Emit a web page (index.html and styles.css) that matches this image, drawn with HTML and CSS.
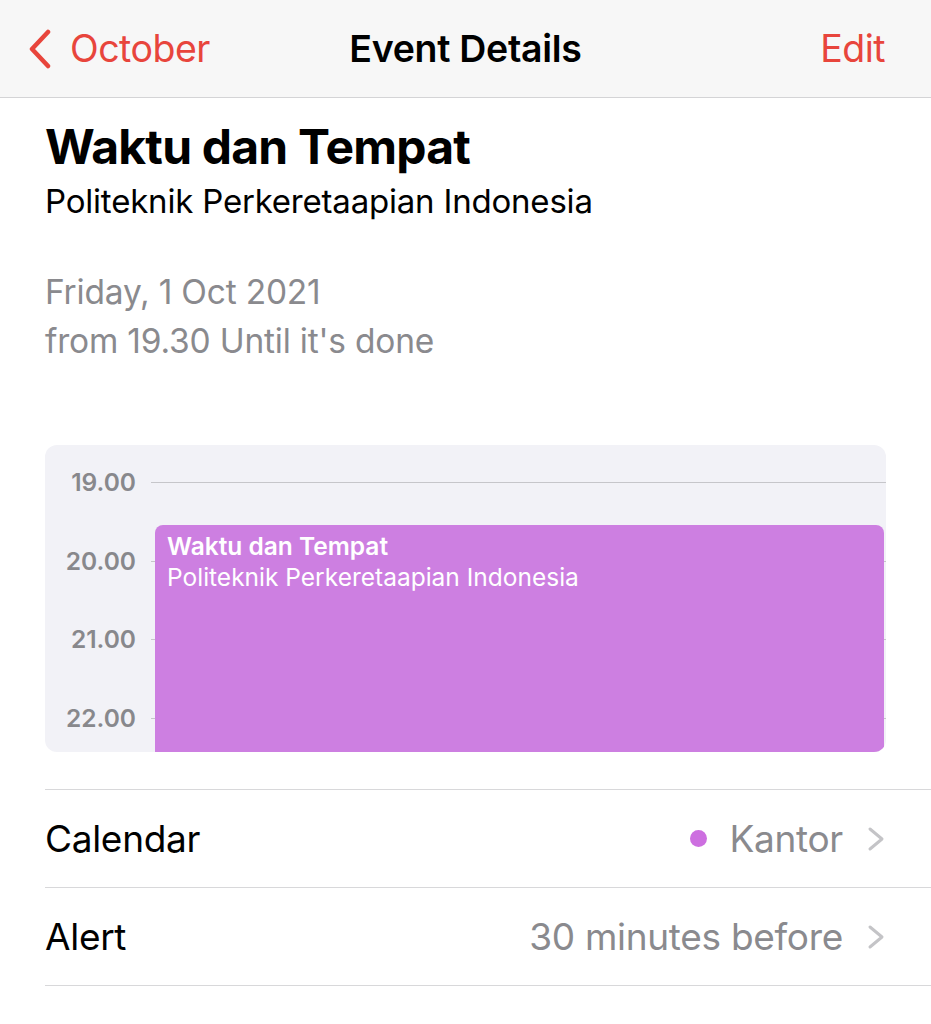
FILE: index.html
```html
<!DOCTYPE html>
<html>
<head>
<meta charset="utf-8">
<link rel="stylesheet" href="styles.css">
</head>
<body>
<header class="nav">
  <div class="nav-left">
    <svg class="back" width="24" height="40" viewBox="0 0 24 40"><path d="M20 3 L4 20 L20 37" fill="none" stroke="#e8453c" stroke-width="4.5" stroke-linecap="round" stroke-linejoin="round"/></svg>
    <span class="nav-link">October</span>
  </div>
  <div class="nav-title">Event Details</div>
  <div class="nav-right"><span class="nav-link">Edit</span></div>
</header>
<main class="content">
  <h1 class="title">Waktu dan Tempat</h1>
  <div class="location">Politeknik Perkeretaapian Indonesia</div>
  <div class="when">
    <div>Friday, 1 Oct 2021</div>
    <div>from 19.30 Until it's done</div>
  </div>
  <div class="day">
    <div class="hours">
      <div class="hour"><span class="hl">19.00</span><span class="hline"></span></div>
      <div class="hour"><span class="hl">20.00</span><span class="hline"></span></div>
      <div class="hour"><span class="hl">21.00</span><span class="hline"></span></div>
      <div class="hour"><span class="hl">22.00</span><span class="hline"></span></div>
    </div>
    <div class="event">
      <div class="ev-title">Waktu dan Tempat</div>
      <div class="ev-sub">Politeknik Perkeretaapian Indonesia</div>
    </div>
  </div>
  <div class="rows">
    <div class="row">
      <span class="row-label">Calendar</span>
      <span class="row-value"><span class="dot"></span>Kantor<svg class="chev" width="18" height="28" viewBox="0 0 18 28"><path d="M3 4 L15 14 L3 24" fill="none" stroke="#c4c4c7" stroke-width="3" stroke-linecap="round" stroke-linejoin="round"/></svg></span>
    </div>
    <div class="row">
      <span class="row-label">Alert</span>
      <span class="row-value">30 minutes before<svg class="chev" width="18" height="28" viewBox="0 0 18 28"><path d="M3 4 L15 14 L3 24" fill="none" stroke="#c4c4c7" stroke-width="3" stroke-linecap="round" stroke-linejoin="round"/></svg></span>
    </div>
  </div>
</main>
</body>
</html>
```
FILE: styles.css
```css
* { box-sizing: border-box; }
html, body { margin: 0; padding: 0; background: #ffffff; }
body {
  font-family: Inter, "Noto Sans", "Liberation Sans", sans-serif;
  color: #000;
  width: 931px;
  height: 1024px;
  overflow: hidden;
}
.nav {
  height: 98px;
  background: #f7f7f7;
  border-bottom: 1px solid #d4d4d6;
  display: grid;
  grid-template-columns: 1fr auto 1fr;
  align-items: center;
  padding: 0 28px 0 28px;
}
.nav-left { display: flex; align-items: center; gap: 18px; }
.back { display: block; }
.nav-link { color: #e8453c; font-size: 37.5px; letter-spacing: -0.5px; }
.nav-title { font-size: 37.5px; font-weight: 600; letter-spacing: -0.3px; }
.nav-right { justify-self: end; margin-right: 18px; }
.content { padding: 0 45px 0 45px; }
.title {
  margin: 21px 0 0 0;
  font-size: 48px;
  font-weight: 700;
  letter-spacing: -0.8px;
  line-height: 56px;
}
.location { font-size: 33px; line-height: 42px; margin-top: 5px; letter-spacing: -0.2px; }
.when {
  margin-top: 46px;
  color: #8a8a8e;
  font-size: 33.5px;
  line-height: 49px;
  letter-spacing: -0.2px;
}
.day {
  margin-top: 79px;
  height: 307px;
  background: #f2f2f7;
  border-radius: 12px;
  position: relative;
  overflow: hidden;
}
.hours { padding-top: 22px; }
.hour { height: 78.7px; display: flex; align-items: flex-start; }
.hl {
  width: 91px;
  text-align: right;
  font-size: 24.5px;
  font-weight: 600;
  color: #88888c;
  line-height: 30px;
}
.hline { flex: 1; margin-left: 15px; margin-top: 15px; height: 1px; background: #c6c6ca; }
.event {
  position: absolute;
  left: 110px;
  right: 2px;
  top: 80px;
  bottom: 0;
  background: #cd7fe1;
  border-radius: 8px 8px 0 0;
  padding: 6px 12px;
  color: #fff;
}
.ev-title { font-size: 24.5px; font-weight: 600; line-height: 30px; }
.ev-sub { font-size: 24.5px; line-height: 32px; }
.rows { margin-top: 37px; margin-right: -45px; border-top: 1px solid #d8d8da; }
.row {
  height: 98px;
  display: flex;
  align-items: center;
  justify-content: space-between;
  border-bottom: 1px solid #d8d8da;
  padding-right: 46px;
}
.row-label { font-size: 37px; letter-spacing: -0.3px; }
.row-value { display: flex; align-items: center; color: #8a8a8e; font-size: 37px; letter-spacing: -0.3px; }
.dot { width: 17px; height: 17px; border-radius: 50%; background: #cd6fe0; margin-right: 22px; }
.chev { margin-left: 24px; display: block; }
```
